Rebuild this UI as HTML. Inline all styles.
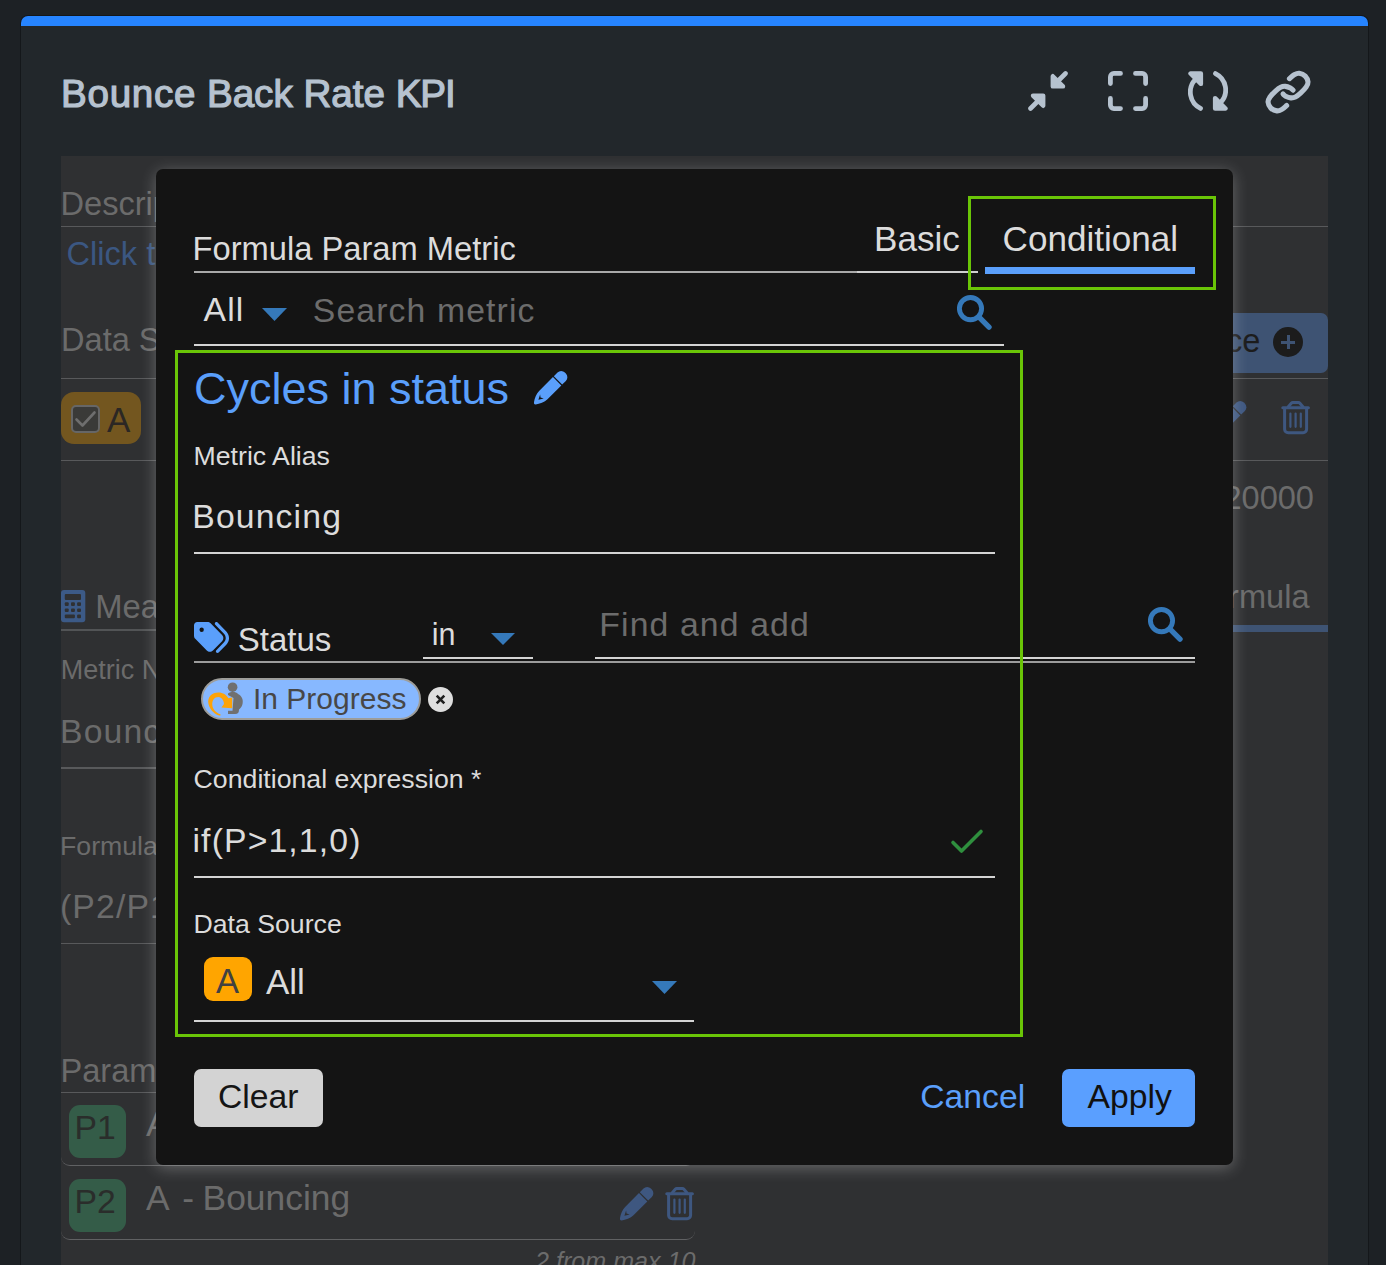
<!DOCTYPE html>
<html lang="en">
<head>
<meta charset="utf-8">
<title>Bounce Back Rate KPI</title>
<style>
*{box-sizing:border-box;margin:0;padding:0}
html,body{width:1386px;height:1265px;overflow:hidden;background:#1d2125;font-family:"Liberation Sans",Arial,sans-serif;}
.abs,.t{position:absolute}
.t{white-space:nowrap;line-height:1}
#card{position:absolute;left:21px;top:16px;width:1347px;height:1300px;background:#22272b;border-top:10px solid #2684ff;border-radius:7px 7px 0 0;box-shadow:0 0 0 1px rgba(10,12,14,.45)}
#panel{position:absolute;left:61px;top:156px;width:1267px;height:1200px;background:#2f3032}
#modal{position:absolute;left:156px;top:169px;width:1077px;height:996px;background:#141414;border-radius:7px;box-shadow:0 3px 16px rgba(255,255,255,.28)}
.hl{position:absolute;height:1px;background:#58595b}
.ml{position:absolute;height:2px;background:#d4d4d4}
.dim{color:#6b6b6b}
.w{color:#dcdcdc}
.gbox{position:absolute;border:3px solid #6ac507}
</style>
</head>
<body>
<div id="card"></div>
<div class="t" id="title" style="left:60.5px;top:75px;font-size:38.3px;color:#b6c2cf;-webkit-text-stroke:1.2px #b6c2cf;transform-origin:0 0;transform:scaleX(1.008)"><span style="letter-spacing:.7px">Bounce</span> Back Rate <span style="letter-spacing:-1.1px">KPI</span></div>
<svg class="abs" style="left:1028px;top:71px" width="40" height="40" viewBox="0 0 40 40"><g fill="#b6c2cf" stroke="#b6c2cf" stroke-linejoin="round" stroke-linecap="round"><path stroke-width="4.600" fill="none" d="M37.500 2.500L27.500 12.500"/><path stroke-width="4.400" d="M24.800 5.200V15.400H35z"/><path stroke-width="4.600" fill="none" d="M2.500 37.500L12.500 27.500"/><path stroke-width="4.400" d="M15.200 34.800V24.600H5z"/></g></svg><svg class="abs" style="left:1108px;top:71px" width="40" height="40" viewBox="0 0 40 40"><g fill="none" stroke="#b6c2cf" stroke-width="4.800" stroke-linejoin="round" stroke-linecap="round"><path d="M2.400 12.500V5.900a3.500 3.500 0 0 1 3.500-3.500h6.600"/><path d="M27.500 2.400h6.600a3.500 3.500 0 0 1 3.500 3.500v6.600"/><path d="M37.600 27.500v6.600a3.500 3.500 0 0 1-3.500 3.500h-6.600"/><path d="M12.500 37.600H5.900a3.500 3.500 0 0 1-3.500-3.500v-6.600"/></g></svg><svg class="abs" style="left:1188px;top:71px" width="40" height="40" viewBox="0 0 40 40"><g fill="none" stroke="#b6c2cf" stroke-width="4.800" stroke-linejoin="round" stroke-linecap="round"><path d="M12.500 37.400A18.200 18.200 0 0 1 7.200 8.700"/><path d="M27.500 2.600A18.200 18.200 0 0 1 32.800 31.300"/></g><g fill="#b6c2cf" stroke="#b6c2cf" stroke-width="4.400" stroke-linejoin="round"><path d="M2.500 2.500H12.900V12.900z"/><path d="M37.500 37.500H27.100V27.100z"/></g></svg><svg class="abs" style="left:1260px;top:65px" width="56" height="54" viewBox="0 0 56 54"><g fill="none" stroke="#b6c2cf" stroke-width="5.100" stroke-linecap="round" stroke-linejoin="round"><path d="M29.45 13.66C30.23 13.02 32.51 10.71 34.14 9.82C35.78 8.93 37.42 8.11 39.27 8.32C41.12 8.54 43.78 9.64 45.24 11.10C46.70 12.56 47.87 15.22 48.02 17.07C48.16 18.92 47.34 20.34 46.09 22.19C44.85 24.04 42.32 26.53 40.55 28.17C38.77 29.81 37.06 31.23 35.42 32.01C33.79 32.79 32.37 33.01 30.73 32.86C29.09 32.72 26.89 31.80 25.61 31.16C24.33 30.52 23.47 29.38 23.05 29.02"/><path transform="rotate(180 28.040 27.100)" d="M29.45 13.66C30.23 13.02 32.51 10.71 34.14 9.82C35.78 8.93 37.42 8.11 39.27 8.32C41.12 8.54 43.78 9.64 45.24 11.10C46.70 12.56 47.87 15.22 48.02 17.07C48.16 18.92 47.34 20.34 46.09 22.19C44.85 24.04 42.32 26.53 40.55 28.17C38.77 29.81 37.06 31.23 35.42 32.01C33.79 32.79 32.37 33.01 30.73 32.86C29.09 32.72 26.89 31.80 25.61 31.16C24.33 30.52 23.47 29.38 23.05 29.02"/></g></svg><div id="panel"></div><div class="t" id="b_desc" style="left:60.50px;top:188.20px;font-size:32.6px;color:#6b6b6b;">Description</div>
<div class="hl" style="left:61px;top:226px;width:1267px"></div>
<div class="t" id="b_click" style="left:66.50px;top:237.60px;font-size:32.6px;color:#3b5782;">Click to add description</div>
<div class="t" id="b_ds" style="left:61.00px;top:324.20px;font-size:32.6px;color:#6b6b6b;">Data Source</div>
<div class="abs" style="left:1080px;top:313px;width:248px;height:60px;background:#3e5373;border-radius:7px"></div>
<div class="t" id="b_addsrc" style="left:660.50px;top:324.60px;width:600px;text-align:right;font-size:32.6px;color:#1c1c1c;">Add source</div>
<div class="abs" style="left:1273px;top:327px;width:30px;height:30px;border-radius:50%;background:#1c1c1c"></div>
<div class="abs" style="left:1281px;top:340.500px;width:14px;height:3px;background:#3e5373"></div>
<div class="abs" style="left:1286.500px;top:335px;width:3px;height:14px;background:#3e5373"></div>
<div class="hl" style="left:61px;top:378px;width:1267px"></div>
<div class="abs" style="left:61px;top:392px;width:80px;height:52px;background:#73561f;border-radius:13px"></div>
<div class="abs" style="left:71px;top:405px;width:29px;height:28px;border:2px solid #666;border-radius:5px;background:#3a3a38"></div>
<svg class="abs" style="left:71px;top:405px" width="29" height="28" viewBox="0 0 29 28"><path d="M5.500 14.500 L11.500 20.500 L23.500 7.500" fill="none" stroke="#6e6e6e" stroke-width="2.600" stroke-linecap="round" stroke-linejoin="round"/></svg>
<div class="t" id="b_A" style="left:107.00px;top:401.87px;font-size:35px;color:#2b2724;">A</div>
<svg class="abs" style="left:1281px;top:401px" width="30" height="34" viewBox="0 0 30 34"><g fill="none" stroke="#3e5780" stroke-width="3" stroke-linecap="round" stroke-linejoin="round"><path d="M1.800 6.700h25.600"/><path d="M7.300 5.800L10.500 2.100a1.600 1.600 0 0 1 1.200-.500h5.800a1.600 1.600 0 0 1 1.200 .500L21.900 5.800"/><path d="M3.600 7.600v20.600a3.500 3.500 0 0 0 3.500 3.500h15a3.500 3.500 0 0 0 3.500-3.500V7.600"/></g><g fill="none" stroke="#3e5780" stroke-width="2.200" stroke-linecap="round"><path d="M9.400 12.600v13.200M14.600 12.600v13.200M19.800 12.600v13.200"/></g></svg><svg class="abs" style="left:1213px;top:401px" width="34" height="34" viewBox="6 5 34 34"><g transform="translate(6.100 38.300) rotate(-45)"><path fill="#3e5780" d="M1 -1.300C4 -3.600 9 -5.900 13 -5.900L32.600 -5.900L32.600 5.900L13 5.900C9 5.900 4 3.600 1 1.300Q-.300 0 1 -1.300Z"/><path fill="#3e5780" d="M33.800 -5.900L39 -5.900A5.200 5.200 0 0 1 44.200 -.700L44.200 .700A5.200 5.200 0 0 1 39 5.900L33.800 5.900Z"/><path fill="#2f3032" d="M6.300 -.200L11.200 -2.700L9.400 -.300L10.900 2.700Z"/></g></svg><div class="hl" style="left:61px;top:460px;width:1267px"></div>
<div class="t" id="b_num" style="left:714.00px;top:482.30px;width:600px;text-align:right;font-size:32.6px;color:#6b6b6b;">120000</div>
<div class="t" id="b_ftab" style="left:709.50px;top:580.50px;width:600px;text-align:right;font-size:32.6px;color:#6b6b6b;">Formula</div>
<div class="abs" style="left:1150px;top:625px;width:178px;height:7px;background:#3e5373"></div>
<svg class="abs" id="b_calc" style="left:61px;top:590px" width="24.500" height="32.500" viewBox="0 0 24.500 32.500"><rect x="0" y="0" width="24.300" height="32.300" rx="3" fill="#3c5a87"/><g fill="#2f3032"><rect x="3.800" y="4" width="16.200" height="5.900" rx="1"/><rect x="3.8" y="12.2" width="3.900" height="3.700" rx="1"/><rect x="10" y="12.2" width="3.900" height="3.700" rx="1"/><rect x="16.1" y="12.2" width="3.900" height="3.700" rx="1"/><rect x="3.8" y="18.4" width="3.900" height="3.700" rx="1"/><rect x="10" y="18.4" width="3.900" height="3.700" rx="1"/><rect x="16.1" y="18.4" width="3.900" height="3.700" rx="1"/><rect x="3.800" y="24.600" width="10.100" height="3.700" rx="1"/><rect x="16.100" y="24.600" width="3.900" height="3.700" rx="1"/></g></svg>
<div class="t" id="b_meas" style="left:95.30px;top:591.43px;font-size:32.8px;color:#6b6b6b;">Measure</div>
<div class="hl" style="left:61px;top:629px;width:1100px;height:2px;background:#525456"></div>
<div class="t" id="b_mn" style="left:60.80px;top:657.44px;font-size:27px;color:#6b6b6b;">Metric Name</div>
<div class="t" id="b_bn" style="left:60.00px;top:714.62px;font-size:33.75px;color:#6b6b6b;letter-spacing:1.125px">Bounce Back Rate</div>
<div class="hl" style="left:61px;top:767px;width:600px;height:2px"></div>
<div class="t" id="b_fl" style="left:60.00px;top:832.69px;font-size:26.7px;color:#6b6b6b;">Formula</div>
<div class="t" id="b_fx" style="left:60.00px;top:890.42px;font-size:33.75px;color:#6b6b6b;letter-spacing:1.125px">(P2/P1)*100</div>
<div class="hl" style="left:61px;top:943px;width:600px"></div>
<div class="t" id="b_par" style="left:60.50px;top:1055.30px;font-size:32.6px;color:#6b6b6b;">Parameters</div>
<div class="hl" style="left:61px;top:1092px;width:634px"></div>
<div class="abs" style="left:61px;top:1096px;width:634px;height:70px;border-bottom:1px solid #606163;border-radius:0 0 9px 9px"></div>
<div class="abs" style="left:69px;top:1105px;width:57px;height:53px;background:#345c48;border-radius:11px"></div>
<div class="t" id="b_p1" style="left:74.60px;top:1111.02px;font-size:33.75px;color:#2a2d2b;">P1</div>
<div class="t" id="b_p1t" style="left:146.00px;top:1107.33px;font-size:35.4px;color:#6b6b6b;">A</div>
<div class="abs" style="left:61px;top:1170px;width:634px;height:70px;border-bottom:1px solid #606163;border-radius:0 0 9px 9px"></div>
<div class="abs" style="left:69px;top:1179px;width:57px;height:53px;background:#345c48;border-radius:11px"></div>
<div class="t" id="b_p2" style="left:74.60px;top:1184.62px;font-size:33.75px;color:#2a2d2b;">P2</div>
<div class="t" id="b_p2t" style="left:146.00px;top:1181.23px;font-size:35.4px;color:#6b6b6b;">A<span style="margin:0 -1.2px 0 2.7px"> - </span>Bouncing</div>
<svg class="abs" style="left:620px;top:1187px" width="34" height="34" viewBox="6 5 34 34"><g transform="translate(6.100 38.300) rotate(-45)"><path fill="#3e5780" d="M1 -1.300C4 -3.600 9 -5.900 13 -5.900L32.600 -5.900L32.600 5.900L13 5.900C9 5.900 4 3.600 1 1.300Q-.300 0 1 -1.300Z"/><path fill="#3e5780" d="M33.800 -5.900L39 -5.900A5.200 5.200 0 0 1 44.200 -.700L44.200 .700A5.200 5.200 0 0 1 39 5.900L33.800 5.900Z"/><path fill="#2f3032" d="M6.300 -.200L11.200 -2.700L9.400 -.300L10.900 2.700Z"/></g></svg><svg class="abs" style="left:665px;top:1187px" width="30" height="34" viewBox="0 0 30 34"><g fill="none" stroke="#3e5780" stroke-width="3" stroke-linecap="round" stroke-linejoin="round"><path d="M1.800 6.700h25.600"/><path d="M7.300 5.800L10.500 2.100a1.600 1.600 0 0 1 1.200-.500h5.800a1.600 1.600 0 0 1 1.200 .500L21.900 5.800"/><path d="M3.600 7.600v20.600a3.500 3.500 0 0 0 3.500 3.500h15a3.500 3.500 0 0 0 3.500-3.500V7.600"/></g><g fill="none" stroke="#3e5780" stroke-width="2.200" stroke-linecap="round"><path d="M9.400 12.600v13.200M14.600 12.600v13.200M19.800 12.600v13.200"/></g></svg><div class="t" id="b_max" style="left:95.50px;top:1249.05px;width:600px;text-align:right;font-size:25.1px;color:#6b6b6b;font-style:italic">2 from max 10</div>
<div id="modal"></div><div class="t" id="m_title" style="left:192.50px;top:232.91px;font-size:32.7px;color:#dcdcdc;">Formula Param Metric</div>
<div class="abs" style="left:194px;top:271px;width:664px;height:2px;background:#a9a9a9"></div>
<div class="t" id="m_basic" style="left:874.00px;top:220.98px;font-size:35.1px;color:#dcdcdc;">Basic</div>
<div class="abs" style="left:857px;top:271px;width:121px;height:2px;background:#cfcfcf"></div>
<div class="t" id="m_cond" style="left:1002.60px;top:220.98px;font-size:35.1px;color:#dcdcdc;">Conditional</div>
<div class="abs" style="left:985px;top:267px;width:210px;height:7px;background:#5a9ffb"></div>
<div class="gbox" style="left:968px;top:196px;width:248px;height:94px"></div>
<div class="t" id="m_all" style="left:203.50px;top:293.22px;font-size:33.75px;color:#dcdcdc;letter-spacing:1.125px">All</div>
<svg class="abs" style="left:261.5px;top:308px" width="25" height="13" viewBox="0 0 24 12" preserveAspectRatio="none"><path fill="#3579ba" d="M0 0h24L12 12z"/></svg><div class="t" id="m_search" style="left:312.80px;top:293.82px;font-size:33.75px;color:#6c6c6c;letter-spacing:1.125px">Search metric</div>
<svg class="abs" style="left:956.5px;top:295px" width="35" height="35" viewBox="0 0 35 35"><circle cx="13.500" cy="13.600" r="11.100" fill="none" stroke="#3579ba" stroke-width="4.900"/><path d="M21.800 21.900L32 32.100" fill="none" stroke="#3579ba" stroke-width="5.400" stroke-linecap="round"/></svg><div class="ml" style="left:194px;top:344px;width:810px"></div>
<div class="t" id="m_cyc" style="left:194.00px;top:366.20px;font-size:45px;color:#5a9ffb;">Cycles in status</div>
<svg class="abs" style="left:534px;top:371px" width="34" height="34" viewBox="6 5 34 34"><g transform="translate(6.100 38.300) rotate(-45)"><path fill="#5a9ffb" d="M1 -1.300C4 -3.600 9 -5.900 13 -5.900L32.600 -5.900L32.600 5.900L13 5.900C9 5.900 4 3.600 1 1.300Q-.300 0 1 -1.300Z"/><path fill="#5a9ffb" d="M33.800 -5.900L39 -5.900A5.200 5.200 0 0 1 44.200 -.700L44.200 .700A5.200 5.200 0 0 1 39 5.900L33.800 5.900Z"/><path fill="#141414" d="M6.300 -.200L11.200 -2.700L9.400 -.300L10.900 2.700Z"/></g></svg><div class="t" id="m_alias" style="left:193.50px;top:442.99px;font-size:26.7px;color:#dcdcdc;">Metric Alias</div>
<div class="t" id="m_bounc" style="left:192.30px;top:499.72px;font-size:33.75px;color:#dcdcdc;letter-spacing:1.125px">Bouncing</div>
<div class="ml" style="left:194px;top:552px;width:801px"></div>
<svg class="abs" style="left:194px;top:622px" width="35" height="31" viewBox="0 32 512 448" preserveAspectRatio="none"><path fill="#5a9ffb" d="M345 39.100L472.800 168.400c52.400 53 52.400 138.200 0 191.200L360.800 472.900c-9.300 9.400-24.500 9.500-33.900 .2s-9.500-24.500-.2-33.900L438.600 325.900c33.900-34.300 33.900-89.400 0-123.700L310.900 72.900c-9.300-9.400-9.200-24.600 .2-33.900s24.600-9.200 33.900 .2zM0 229.500V80C0 53.500 21.500 32 48 32H197.500c17 0 33.300 6.700 45.300 18.700l168 168c25 25 25 65.500 0 90.500L277.300 442.700c-25 25-65.500 25-90.500 0l-168-168C6.700 262.700 0 246.500 0 229.500zM144 144a32 32 0 1 0 -64 0 32 32 0 1 0 64 0z"/></svg><div class="t" id="m_status" style="left:237.80px;top:622.86px;font-size:33px;color:#dcdcdc;">Status</div>
<div class="t" id="m_in" style="left:431.70px;top:618.58px;font-size:30.5px;color:#dcdcdc;">in</div>
<svg class="abs" style="left:491px;top:633px" width="24" height="12" viewBox="0 0 24 12" preserveAspectRatio="none"><path fill="#3579ba" d="M0 0h24L12 12z"/></svg><div class="ml" style="left:423px;top:657px;width:110px"></div>
<div class="t" id="m_find" style="left:599.30px;top:608.02px;font-size:33.75px;color:#6c6c6c;letter-spacing:1.125px">Find and add</div>
<svg class="abs" style="left:1147.5px;top:607px" width="35" height="35" viewBox="0 0 35 35"><circle cx="13.500" cy="13.600" r="11.100" fill="none" stroke="#3579ba" stroke-width="4.900"/><path d="M21.800 21.900L32 32.100" fill="none" stroke="#3579ba" stroke-width="5.400" stroke-linecap="round"/></svg><div class="ml" style="left:595px;top:657px;width:600px"></div>
<div class="abs" style="left:194px;top:661px;width:1001px;height:2px;background:#9c9c9c"></div>
<div class="abs" id="chip" style="left:201px;top:678px;width:220px;height:42px;border-radius:21px;background:#87b8ff;border:2px solid #9d9d9a"></div>
<svg class="abs" style="left:198px;top:674px" width="60" height="50" viewBox="0 0 60 50">
<g fill="#707070"><circle cx="34.600" cy="13.200" r="4.800"/><path d="M30 19.500C33 17.500 38 17.500 40 20C44 22 45.500 26 44.500 30C44 33 42 34.500 41 35.500C41 38.500 40 40 37 40L30 40L30 36.800L34.500 36.800L35.500 24L30 21Z"/></g>
<path fill="#fda308" d="M22.300 41.800C17 41 12 36 10.500 30C9 23 14 18.600 20.300 18.600C25 18.600 28.500 21 30.300 24.200L34.200 23.400L34.200 34.200L23.400 33.500L26 29.900C26 27 24 22.900 20.300 22.900C16.500 22.900 14 26 14.300 31C14.600 35 18 39 22.500 40.300Z"/>
</svg>
<div class="t" id="m_inprog" style="left:253.00px;top:683.80px;font-size:30px;color:#474747;">In Progress</div>
<div class="abs" style="left:428px;top:687px;width:25px;height:25px;border-radius:50%;background:#dedede"></div>
<svg class="abs" style="left:428px;top:687px" width="25" height="25" viewBox="0 0 25 25"><path d="M8.700 8.700l7.600 7.600M16.300 8.700l-7.600 7.600" stroke="#1e1e1e" stroke-width="2.600" stroke-linecap="butt" fill="none"/></svg>
<div class="t" id="m_ce" style="left:193.60px;top:766.19px;font-size:26.7px;color:#dcdcdc;">Conditional expression *</div>
<div class="t" id="m_if" style="left:192.50px;top:823.62px;font-size:33.75px;color:#dcdcdc;letter-spacing:1.125px">if(P&gt;1,1,0)</div>
<svg class="abs" style="left:950px;top:827px" width="34" height="28" viewBox="0 0 34 28"><path d="M3 15.500l8.500 8.500L31 4.500" fill="none" stroke="#2f8f3e" stroke-width="3.600" stroke-linecap="round" stroke-linejoin="round"/></svg>
<div class="ml" style="left:194px;top:876px;width:801px"></div>
<div class="t" id="m_dsrc" style="left:193.40px;top:911.09px;font-size:26.7px;color:#dcdcdc;">Data Source</div>
<div class="abs" style="left:204px;top:957px;width:48px;height:44px;border-radius:9px;background:#ffa500"></div>
<div class="t" id="m_A" style="left:216.00px;top:964.49px;font-size:34.5px;color:#414141;">A</div>
<div class="t" id="m_all2" style="left:266.00px;top:964.07px;font-size:35px;color:#dcdcdc;">All</div>
<svg class="abs" style="left:651.5px;top:980.5px" width="25" height="13" viewBox="0 0 24 12" preserveAspectRatio="none"><path fill="#3579ba" d="M0 0h24L12 12z"/></svg><div class="ml" style="left:194px;top:1019.5px;width:500px"></div>
<div class="abs" style="left:194px;top:1069px;width:129px;height:58px;border-radius:7px;background:#d3d3d3"></div>
<div class="t" id="m_clear" style="left:218.00px;top:1080.07px;font-size:33.7px;color:#151515;">Clear</div>
<div class="t" id="m_cancel" style="left:920.30px;top:1080.07px;font-size:33.7px;color:#5a9ffb;">Cancel</div>
<div class="abs" style="left:1062px;top:1069px;width:133px;height:58px;border-radius:7px;background:#5a9fff"></div>
<div class="t" id="m_apply" style="left:1087.50px;top:1080.07px;font-size:33.7px;color:#111;">Apply</div>
<div class="gbox" style="left:175px;top:350px;width:848px;height:687px"></div>
</body>
</html>
